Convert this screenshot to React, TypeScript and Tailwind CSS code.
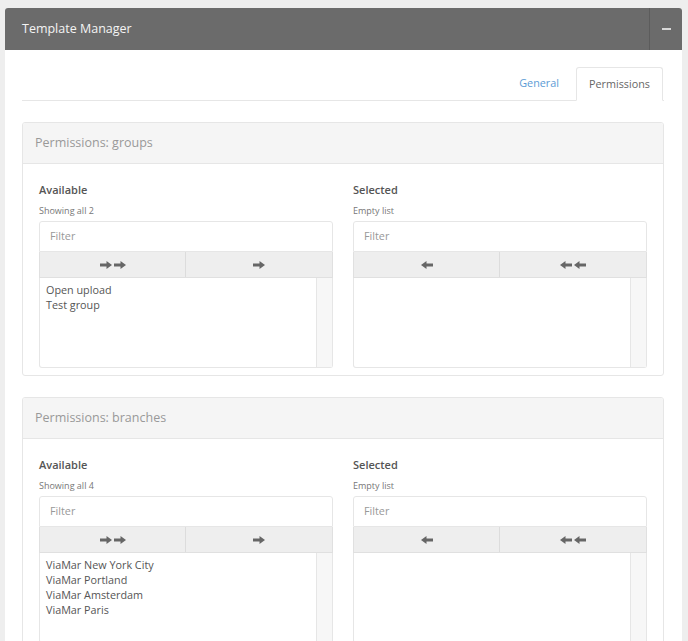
import React from "react";

const font = { fontFamily: '"Open Sans", "Noto Sans", sans-serif' };

function ArrowRight() {
  return (
    <svg width="12" height="8" viewBox="0 0 12 8" className="block">
      <polygon points="0,2.6 6.5,2.6 6.5,0 12,4 6.5,8 6.5,5.4 0,5.4" fill="#666" />
    </svg>
  );
}
function ArrowLeft() {
  return (
    <svg width="12" height="8" viewBox="0 0 12 8" className="block">
      <polygon points="12,2.6 5.5,2.6 5.5,0 0,4 5.5,8 5.5,5.4 12,5.4" fill="#666" />
    </svg>
  );
}

function DualColumn({
  label,
  info,
  items,
  buttons,
}: {
  label: string;
  info: string;
  items: string[];
  buttons: React.ReactNode[];
}) {
  return (
    <div className="flex flex-col">
      <div className="text-[11px] leading-[16px] font-semibold text-[#555]">{label}</div>
      <div className="mt-[7px] text-[9px] leading-[12px] text-[#777]">{info}</div>
      <div className="mt-[4px] h-[31px] border border-[#e6e6e6] rounded-t-[3px] flex items-center pl-[10px] text-[10.8px] text-[#999]">
        Filter
      </div>
      <div className="grid grid-cols-2 h-[26px] bg-[#eeeeee] border-x border-b border-[#e0e0e0]">
        <div className="flex items-center justify-center gap-[2px] border-r border-[#dcdcdc]">{buttons[0]}</div>
        <div className="flex items-center justify-center gap-[2px]">{buttons[1]}</div>
      </div>
      <div className="h-[90px] border-x border-b border-[#e6e6e6] rounded-b-[3px] flex">
        <div className="flex-1 pl-[6px] pt-[4px] text-[10.8px] leading-[15px] text-[#555]">
          {items.map((t) => (
            <div key={t}>{t}</div>
          ))}
        </div>
        <div className="w-[16px] bg-[#f7f7f7] border-l border-[#e6e6e6]" />
      </div>
    </div>
  );
}

function PermPanel({ title, items, count }: { title: string; items: string[]; count: number }) {
  return (
    <div className="border border-[#e6e6e6] rounded-[3px] bg-white overflow-hidden">
      <div className="h-[41px] bg-[#f5f5f5] border-b border-[#e6e6e6] flex items-center pl-[12px] text-[12.5px] text-[#999]">
        {title}
      </div>
      <div className="grid grid-cols-2 gap-[20px] px-[16px] pt-[18px] pb-[7px]">
        <DualColumn
          label="Available"
          info={`Showing all ${count}`}
          items={items}
          buttons={[
            <>
              <ArrowRight />
              <ArrowRight />
            </>,
            <ArrowRight />,
          ]}
        />
        <DualColumn
          label="Selected"
          info="Empty list"
          items={[]}
          buttons={[
            <ArrowLeft />,
            <>
              <ArrowLeft />
              <ArrowLeft />
            </>,
          ]}
        />
      </div>
    </div>
  );
}

export default function App() {
  return (
    <div className="h-[641px] overflow-hidden bg-[#eeeeee] pt-[8px] pl-[5px] pr-[6px]" style={font}>
      <div className="bg-white rounded-t-[3px] h-[640px]">
        <div className="h-[42px] bg-[#6b6b6b] rounded-t-[3px] flex items-stretch">
          <div className="flex-1 flex items-center pl-[17px] text-[12.5px] text-[#f4f4f4]">Template Manager</div>
          <div className="w-[33px] border-l border-[#5c5c5c] flex items-center justify-center">
            <div className="w-[9px] h-[2px] bg-[#d8d8d8]" />
          </div>
        </div>
        <div className="pl-[17px] pr-[18px] pt-[17px]">
          <div className="flex justify-end items-end h-[34px] border-b border-[#e6e6e6]">
            <div className="h-[33px] flex items-center px-[12px] mr-[5px] text-[10.8px] text-[#5b9bd5]">General</div>
            <div className="h-[34px] -mb-[1px] flex items-center px-[12px] mr-[1px] border border-[#e6e6e6] border-b-white rounded-t-[3px] bg-white text-[10.8px] text-[#666]">
              Permissions
            </div>
          </div>
          <div className="mt-[21px] flex flex-col gap-[21px]">
            <PermPanel title="Permissions: groups" count={2} items={["Open upload", "Test group"]} />
            <PermPanel
              title="Permissions: branches"
              count={4}
              items={["ViaMar New York City", "ViaMar Portland", "ViaMar Amsterdam", "ViaMar Paris"]}
            />
          </div>
        </div>
      </div>
    </div>
  );
}
